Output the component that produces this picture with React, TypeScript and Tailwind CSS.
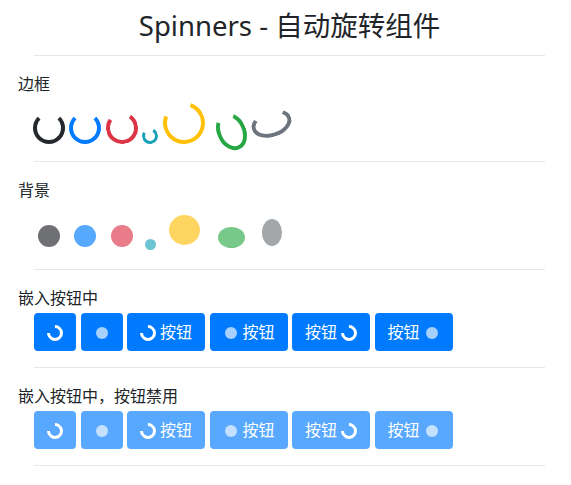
import React from 'react';

const font = { fontFamily: '"Noto Sans", "Noto Sans CJK SC", sans-serif' };

// border spinners: wrapper box (sits on the row baseline) + the ring drawn inside it
const borderSpinners = [
  { wrap: 'w-[32px] h-[32px]', ring: 'w-[32px] h-[32px] border-4 border-[#25292d] border-r-transparent -rotate-90' },
  { wrap: 'ml-[4px] w-[32px] h-[32px]', ring: 'w-[32px] h-[32px] border-4 border-[#007bff] border-r-transparent -rotate-90' },
  { wrap: 'ml-[5px] w-[32px] h-[32px]', ring: 'w-[32px] h-[32px] border-4 border-[#dc3545] border-r-transparent rotate-[-100deg]' },
  { wrap: 'ml-[4px] w-[16px] h-[16px]', ring: 'w-[16px] h-[16px] border-[3px] border-[#17a2b8] border-r-transparent rotate-[-105deg]' },
  { wrap: 'ml-[5px] w-[42px] h-[42px]', ring: 'w-[42px] h-[42px] border-4 border-[#ffc107] border-r-transparent rotate-[-115deg]' },
  { wrap: 'ml-[11px] w-[31px] h-[26px]', ring: 'w-[29px] h-[39px] border-4 border-[#28a745] border-t-transparent rotate-[-25deg]' },
  { wrap: 'ml-[5px] w-[39px] h-[41px]', ring: 'w-[41px] h-[27px] border-4 border-[#6c757d] border-t-transparent rotate-[-18deg]' },
];

const growSpinners = [
  { wrap: 'w-[32px] h-[32px]', dot: 'w-[22px] h-[22px] bg-[#6f7074]' },
  { wrap: 'ml-[4px] w-[32px] h-[32px]', dot: 'w-[22px] h-[22px] bg-[#57a8ff]' },
  { wrap: 'ml-[5px] w-[32px] h-[32px]', dot: 'w-[22px] h-[22px] bg-[#e87c88]' },
  { wrap: 'ml-[4px] w-[16px] h-[16px]', dot: 'w-[11px] h-[11px] bg-[#6cc3d2]' },
  { wrap: 'ml-[5px] w-[42px] h-[45px]', dot: 'w-[31px] h-[30px] bg-[#ffd561]' },
  { wrap: 'ml-[11px] w-[31px] h-[30px]', dot: 'w-[27px] h-[21px] bg-[#78c889]' },
  { wrap: 'ml-[5px] w-[39px] h-[40px]', dot: 'w-[20px] h-[27px] bg-[#a3a7aa]' },
];

const Divider = () => <div className="ml-[34px] mr-[26px] h-px bg-[#e6e6e6]" />;

const Label = ({ children }: { children: React.ReactNode }) => (
  <div className="mt-4 pl-[18px] text-[16px] leading-6 text-[#212529]">{children}</div>
);

const BtnRing = () => (
  <span className="block w-4 h-4 shrink-0 rounded-full border-[3px] border-white border-r-transparent rotate-[-135deg] translate-y-px" />
);

const BtnDot = () => (
  <span className="flex w-4 h-4 shrink-0 items-center justify-center translate-y-px">
    <span className="block w-3 h-3 rounded-full bg-white/65" />
  </span>
);

const Btn = ({ children, disabled }: { children: React.ReactNode; disabled?: boolean }) => (
  <button
    disabled={disabled}
    className={
      'flex h-[38px] items-center gap-[4px] rounded-[4px] bg-[#007bff] px-[13px] text-[16px] leading-6 text-white ' +
      (disabled ? 'opacity-65' : '')
    }
  >
    {children}
  </button>
);

const ButtonRow = ({ disabled }: { disabled?: boolean }) => (
  <div className="mt-[3px] flex gap-[4.5px] pl-[34px]">
    <Btn disabled={disabled}>
      <BtnRing />
    </Btn>
    <Btn disabled={disabled}>
      <BtnDot />
    </Btn>
    <Btn disabled={disabled}>
      <BtnRing />
      <span>按钮</span>
    </Btn>
    <Btn disabled={disabled}>
      <BtnDot />
      <span>按钮</span>
    </Btn>
    <Btn disabled={disabled}>
      <span>按钮</span>
      <BtnRing />
    </Btn>
    <Btn disabled={disabled}>
      <span>按钮</span>
      <BtnDot />
    </Btn>
  </div>
);

export default function App() {
  return (
    <div className="w-[571px] min-h-[485px] bg-white text-[#212529]" style={font}>
      <h3 className="pt-[9px] mb-[12px] pl-[8px] text-center text-[27.5px] leading-[34px] font-normal">
        Spinners - 自动旋转组件
      </h3>
      <Divider />

      <Label>边框</Label>
      <div className="flex h-[49px] items-end pb-px pl-[33px] mb-4">
        {borderSpinners.map((s, i) => (
          <div key={i} className={'flex shrink-0 items-center justify-center ' + s.wrap}>
            <div className={'shrink-0 rounded-[50%] ' + s.ring} />
          </div>
        ))}
      </div>
      <Divider />

      <Label>背景</Label>
      <div className="flex h-[51px] items-end pb-px pl-[33px] mb-4">
        {growSpinners.map((s, i) => (
          <div key={i} className={'flex shrink-0 items-center justify-center ' + s.wrap}>
            <div className={'shrink-0 rounded-[50%] ' + s.dot} />
          </div>
        ))}
      </div>
      <Divider />

      <Label>嵌入按钮中</Label>
      <div className="mb-4">
        <ButtonRow />
      </div>
      <Divider />

      <Label>嵌入按钮中，按钮禁用</Label>
      <div className="mb-4">
        <ButtonRow disabled />
      </div>
      <Divider />
    </div>
  );
}
